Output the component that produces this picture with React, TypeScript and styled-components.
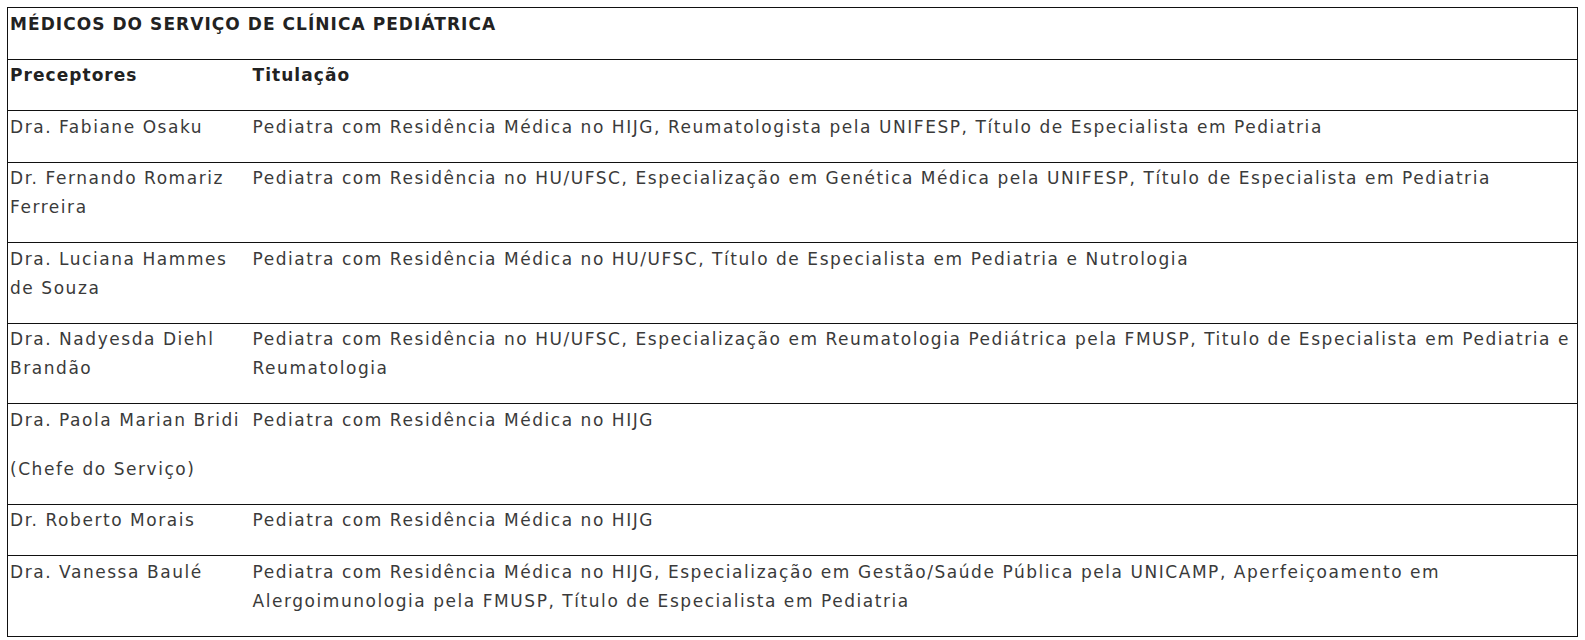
import styled, { createGlobalStyle } from 'styled-components'

const GlobalStyle = createGlobalStyle`
  html {
    overflow: hidden;
  }
  body {
    margin: 7px 0 8px 7px;
    background: #fff;
    font-family: "DejaVu Sans", "Noto Sans", sans-serif;
  }
`

const Table = styled.table`
  width: 1571px;
  border-collapse: collapse;
  table-layout: fixed;
  border: 1px solid #111;
`

const Col = styled.col<{ $width?: string }>`
  width: ${(p) => p.$width ?? 'auto'};
`

const Row = styled.tr`
  border-bottom: 1px solid #111;
`

const Cell = styled.td`
  vertical-align: top;
  padding: 1.5px 1px 0 2px;
`

const Para = styled.p<{ $bold?: boolean }>`
  margin: 0 0 20px;
  font-size: 17px;
  letter-spacing: ${(p) => (p.$bold ? '1.05px' : '1.55px')};
  line-height: 29px;
  color: ${(p) => (p.$bold ? '#222' : '#3a3a3a')};
  font-weight: ${(p) => (p.$bold ? 700 : 400)};
`

type Medico = {
  nome: string[]
  titulacao: string
}

const medicos: Medico[] = [
  {
    nome: ['Dra. Fabiane Osaku'],
    titulacao:
      'Pediatra com Residência Médica no HIJG, Reumatologista pela UNIFESP, Título de Especialista em Pediatria',
  },
  {
    nome: ['Dr. Fernando Romariz Ferreira'],
    titulacao:
      'Pediatra com Residência no HU/UFSC, Especialização em Genética Médica pela UNIFESP, Título de Especialista em Pediatria',
  },
  {
    nome: ['Dra. Luciana Hammes de Souza'],
    titulacao: 'Pediatra com Residência Médica no HU/UFSC, Título de Especialista em Pediatria e Nutrologia',
  },
  {
    nome: ['Dra. Nadyesda Diehl Brandão'],
    titulacao:
      'Pediatra com Residência no HU/UFSC, Especialização em Reumatologia Pediátrica pela FMUSP, Titulo de Especialista em Pediatria e Reumatologia',
  },
  {
    nome: ['Dra. Paola Marian Bridi', '(Chefe do Serviço)'],
    titulacao: 'Pediatra com Residência Médica no HIJG',
  },
  {
    nome: ['Dr. Roberto Morais'],
    titulacao: 'Pediatra com Residência Médica no HIJG',
  },
  {
    nome: ['Dra. Vanessa Baulé'],
    titulacao:
      'Pediatra com Residência Médica no HIJG, Especialização em Gestão/Saúde Pública pela UNICAMP, Aperfeiçoamento em Alergoimunologia pela FMUSP, Título de Especialista em Pediatria',
  },
]

const App = () => {
  return (
    <>
      <GlobalStyle />
      <Table>
        <colgroup>
          <Col $width="243px" />
          <Col />
        </colgroup>
        <tbody>
          <Row>
            <Cell colSpan={2}>
              <Para $bold>MÉDICOS DO SERVIÇO DE CLÍNICA PEDIÁTRICA</Para>
            </Cell>
          </Row>
          <Row>
            <Cell>
              <Para $bold>Preceptores</Para>
            </Cell>
            <Cell>
              <Para $bold>Titulação</Para>
            </Cell>
          </Row>
          {medicos.map((m) => (
            <Row key={m.nome[0]}>
              <Cell>
                {m.nome.map((linha) => (
                  <Para key={linha}>{linha}</Para>
                ))}
              </Cell>
              <Cell>
                <Para>{m.titulacao}</Para>
              </Cell>
            </Row>
          ))}
        </tbody>
      </Table>
    </>
  )
}

export default App
